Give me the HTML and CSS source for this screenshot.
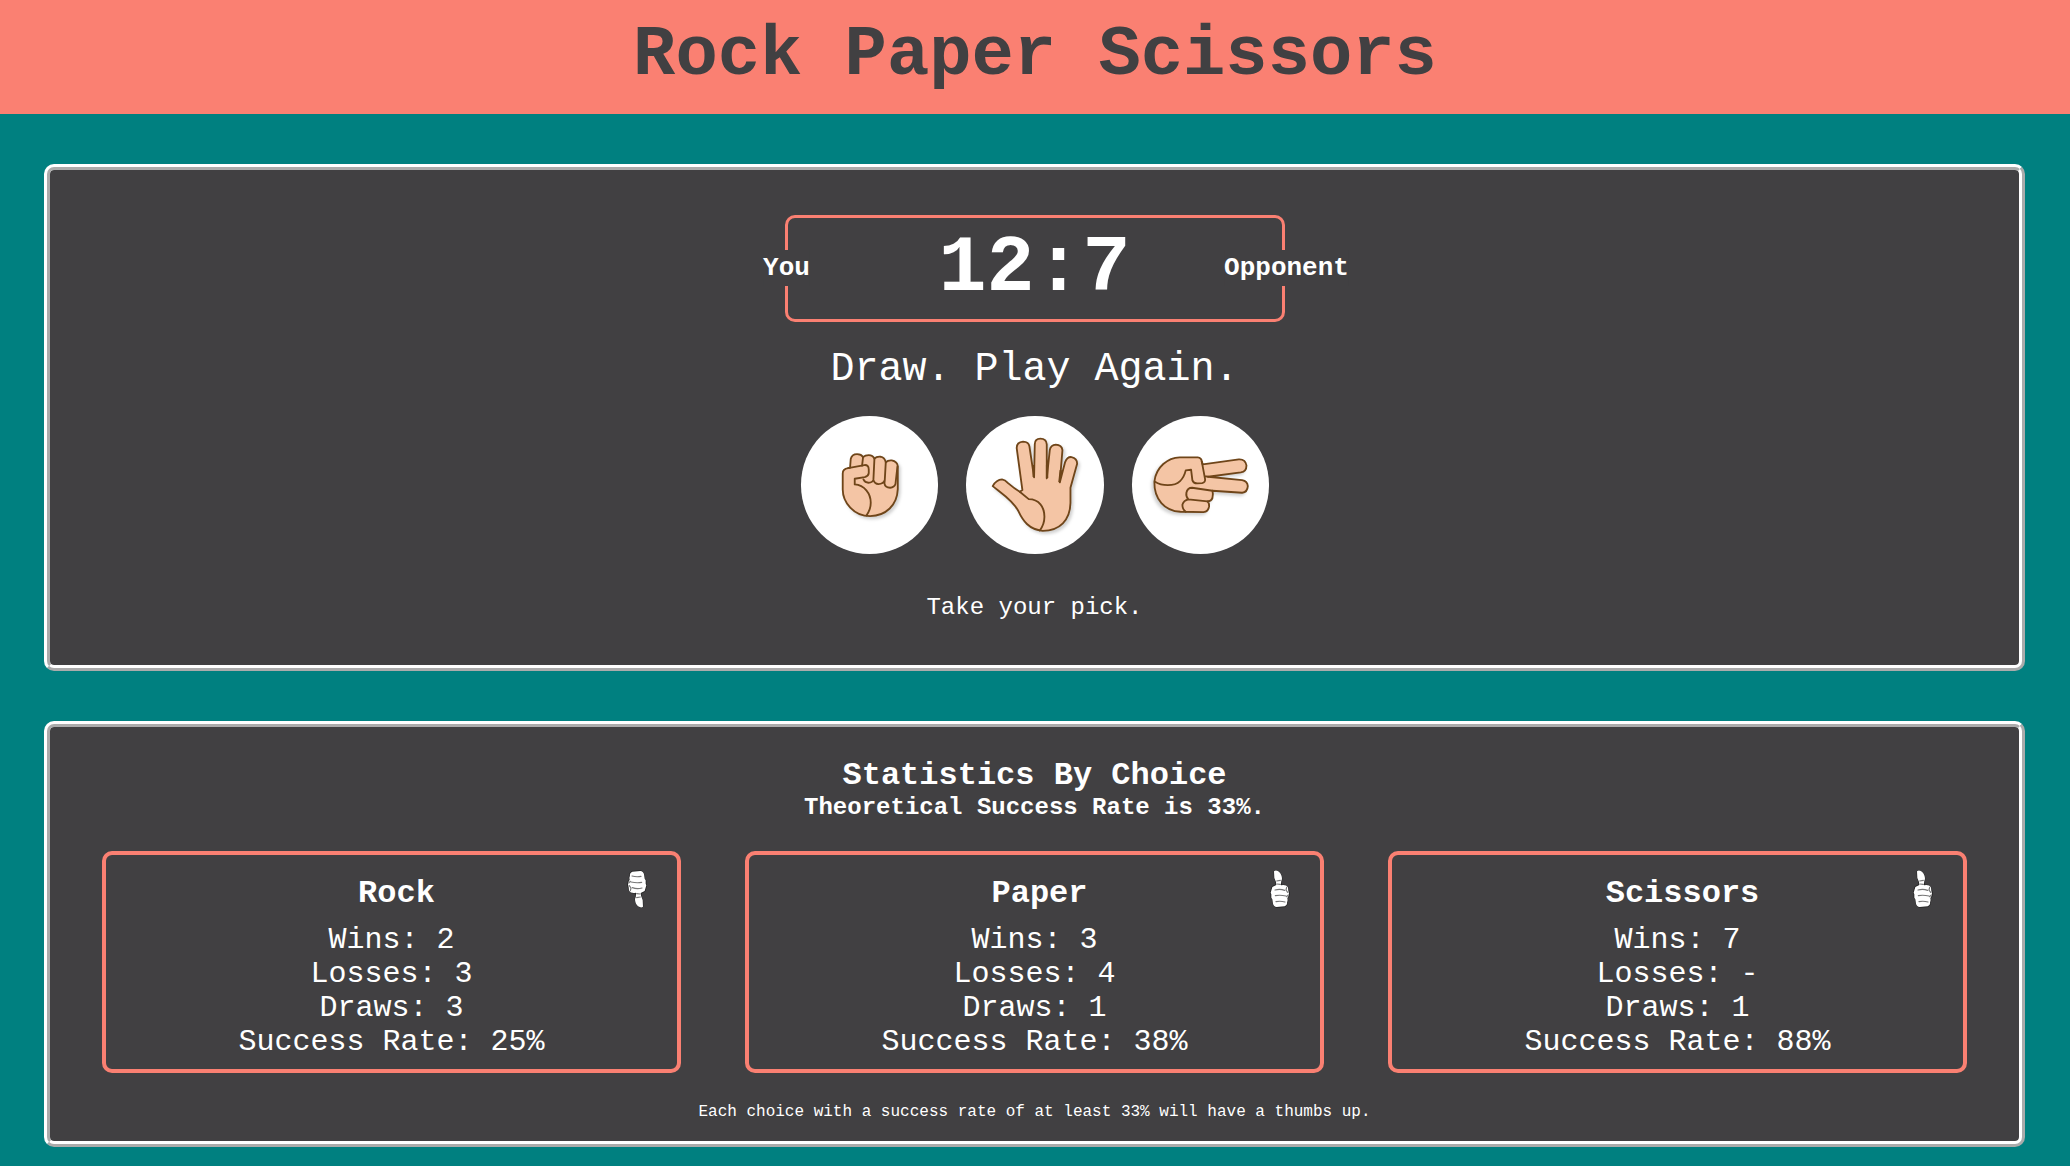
FILE: index.html
```
<!DOCTYPE html>
<html lang="en">
<head>
<meta charset="utf-8">
<title>Rock Paper Scissors</title>
<link rel="stylesheet" href="styles.css">
</head>
<body>
<svg class="defs" aria-hidden="true">
  <symbol id="thumb" viewBox="46 59 60 114">
    <path class="thumb-edge" d="M58 63Q63 58 73 64Q82 72 82 86Q78 94 80 104Q94 102 100 111L104 129Q104 140 98 144Q101 150 97 157Q100 166 90 169L66 171Q57 170 55 160L53 146L49 142L49 132L47 127L52 109L64 103Q65 94 59 83Z"/>
    <path class="thumb-fill" d="M58 63Q63 58 73 64Q82 72 82 86Q78 94 79 105Q94 102 100 111L101 121L103 130Q102 139 98 144Q100 150 97 156Q99 165 90 168L66 170Q57 169 55 160L53 147L50 142L50 132L48 127L53 110L65 104Q65 94 59 83Z"/>
    <path class="thumb-lines" d="M67 101L77 102M66 92L77 90M61 119Q76 115 90 120M62 136Q76 133 94 137M64 154Q77 151 91 155M96 111L94 119L99 126M96 139L101 134"/>
  </symbol>
</svg>
<header class="header"><h1>Rock Paper Scissors</h1></header>
<main>
  <section class="panel game">
    <div class="score">
      <span class="label you">You</span>
      12:7
      <span class="label opponent">Opponent</span>
    </div>
    <p class="result">Draw. Play Again.</p>
    <div class="choices">
      <button class="choice" aria-label="Rock">
        <svg viewBox="30 33 412 412">
          <g class="hand">
            <path d="M155 205Q155 191 171 189L177 188L179 162Q182 147 198 147Q211 147 216 156Q222 150 233 150Q245 150 250 161Q256 154 268 155Q281 157 284 172Q290 165 302 166Q318 169 320 183L320 252C318 300 285 332 237 333C188 333 155 291 155 253Z"/>
            <path class="no-shadow" d="M216 156L213 182M250 161L247 223Q245 233 232 233Q222 233 217 223M284 172L281 225Q277 237 262 237Q251 236 247 225M281 225L280 235Q282 248 297 248Q310 247 313 237L319 185"/>
            <path class="no-shadow" d="M171 189L220 180Q233 179 233 193V204Q232 213 221 216L191 221V238C220 240 239 265 239 293Q239 313 226 331"/>
          </g>
        </svg>
      </button>
      <button class="choice" aria-label="Paper">
        <svg viewBox="34 33 412 412">
          <g class="hand">
            <path d="M114 243Q125 224 142 223Q151 224 160 234Q180 251 195 260L203 255L186 130Q185 112 205 110Q222 111 224 124L238 217L240 118Q240 101 257 101Q275 101 276 118L276 220L285 135Q288 120 303 119Q321 120 323 135L315 232L331 171Q337 155 350 156Q367 159 367 176L347 248L347 294C346 345 315 377 264 377C222 373 204 346 191 318C176 286 137 262 114 243Z"/>
            <path class="no-shadow" d="M195 260L222 282C253 282 269 306 269 335Q269 358 255 376"/>
            <path class="web" d="M237 180V216M277 180V219M318 195L314 231"/>
          </g>
        </svg>
      </button>
      <button class="choice" aria-label="Scissors">
        <svg viewBox="34 33 412 412">
          <g class="hand left-shadow">
            <path d="M101 230C106 185 142 158 177 157L231 157Q242 158 243 169L246 178L354 163Q374 162 377 181Q377 199 360 202L262 215L364 225Q380 228 381 243Q380 261 364 263L275 257Q278 267 275 279Q272 288 260 289Q266 293 265 304Q263 320 248 321L179 320C132 317 100 283 101 230Z"/>
            <path class="no-shadow" d="M103 230C123 243 160 245 178 228Q190 217 195 196L211 194L215 226Q218 235 229 235L244 234Q254 232 253 222L243 169M262 215L252 213"/>
            <path class="no-shadow" d="M275 257L214 248Q200 248 197 263Q195 275 203 283L260 289M203 283Q189 286 185 299Q185 313 195 320"/>
          </g>
        </svg>
      </button>
    </div>
    <p class="prompt">Take your pick.</p>
  </section>
  <section class="panel stats">
    <h2>Statistics By Choice</h2>
    <h3>Theoretical Success Rate is 33%.</h3>
    <div class="cards">
      <article class="card">
        <h4>Rock</h4>
        <svg class="thumb down"><use href="#thumb"/></svg>
        <p>Wins: 2</p><p>Losses: 3</p><p>Draws: 3</p><p>Success Rate: 25%</p>
      </article>
      <article class="card">
        <h4>Paper</h4>
        <svg class="thumb"><use href="#thumb"/></svg>
        <p>Wins: 3</p><p>Losses: 4</p><p>Draws: 1</p><p>Success Rate: 38%</p>
      </article>
      <article class="card">
        <h4>Scissors</h4>
        <svg class="thumb"><use href="#thumb"/></svg>
        <p>Wins: 7</p><p>Losses: -</p><p>Draws: 1</p><p>Success Rate: 88%</p>
      </article>
    </div>
    <p class="note">Each choice with a success rate of at least 33% will have a thumbs up.</p>
  </section>
</main>
</body>
</html>
```

FILE: styles.css
```
* { box-sizing: border-box; margin: 0; padding: 0; }
html { height: 100%; overflow: hidden; }
body {
  min-height: 100%;
  background: #008080;
  color: #fff;
  font-family: "Courier New", Courier, "Liberation Mono", monospace;
  text-align: center;
}
.defs { position: absolute; width: 0; height: 0; }
.header { height: 114px; background: #fa8072; color: #414042; }
.header h1 { font-size: 70.5px; line-height: 110px; font-weight: bold; }
main { display: flex; flex-direction: column; gap: 50px; padding: 50px 45px 0 44px; }
.panel {
  display: flex;
  flex-direction: column;
  align-items: center;
  background: #414042;
  border: 6px ridge #fff;
  border-radius: 10px;
}
.game { height: 507px; padding-top: 45px; }
.stats { height: 426px; padding: 30px 52px 0; }

.score {
  position: relative;
  width: 500px;
  height: 107px;
  border: 3px solid #fa8072;
  border-radius: 10px;
  font-size: 80px;
  font-weight: bold;
  line-height: 102px;
}
.label {
  position: absolute;
  top: 32px;
  height: 36px;
  line-height: 36px;
  font-size: 26px;
  background: #414042;
  transform: translateX(-50%);
}
.you { left: -1px; }
.opponent { left: 499px; }
.result { margin-top: 25px; font-size: 40px; line-height: 46px; }
.choices { display: flex; gap: 28px; margin-top: 23px; padding-left: 1px; }
.choice {
  width: 137.5px;
  height: 137.5px;
  border: 0;
  border-radius: 50%;
  background: #fff;
}
.choice svg { display: block; width: 100%; height: 100%; }
.hand {
  fill: #f4c5a5;
  stroke: #6f4519;
  stroke-width: 5.5;
  stroke-linejoin: round;
  stroke-linecap: round;
  filter: drop-shadow(6px 7px 5px rgba(0, 0, 0, .18));
}
.left-shadow { filter: drop-shadow(-6px 7px 5px rgba(0, 0, 0, .18)); }
.hand .no-shadow { fill: none; }
.hand .web { fill: none; stroke-width: 7; stroke-linecap: butt; }
.prompt { margin-top: 40px; font-size: 24px; line-height: 28px; }

.stats h2 { font-size: 32px; line-height: 37px; }
.stats h3 { font-size: 24px; line-height: 28px; }
.cards {
  display: grid;
  grid-template-columns: repeat(3, 1fr);
  gap: 64px;
  width: 100%;
  margin-top: 29px;
}
.card {
  position: relative;
  height: 222px;
  padding-top: 20px;
  border: 4px solid #fa8072;
  border-radius: 10px;
}
.card h4 { margin: 0 0 11px 10px; font-size: 32px; line-height: 37px; }
.card p { font-size: 30px; line-height: 34px; }
.thumb { position: absolute; top: 15px; right: 30px; width: 20px; height: 38px; }
.down { transform: rotate(180deg); }
.thumb-edge { fill: #222; stroke: #252525; stroke-width: 3; }
.thumb-fill { fill: #fff; }
.thumb-lines { fill: none; stroke: #777; stroke-width: 3.5; stroke-linecap: round; }
.note { margin-top: 30px; font-size: 16px; line-height: 18px; }
```
